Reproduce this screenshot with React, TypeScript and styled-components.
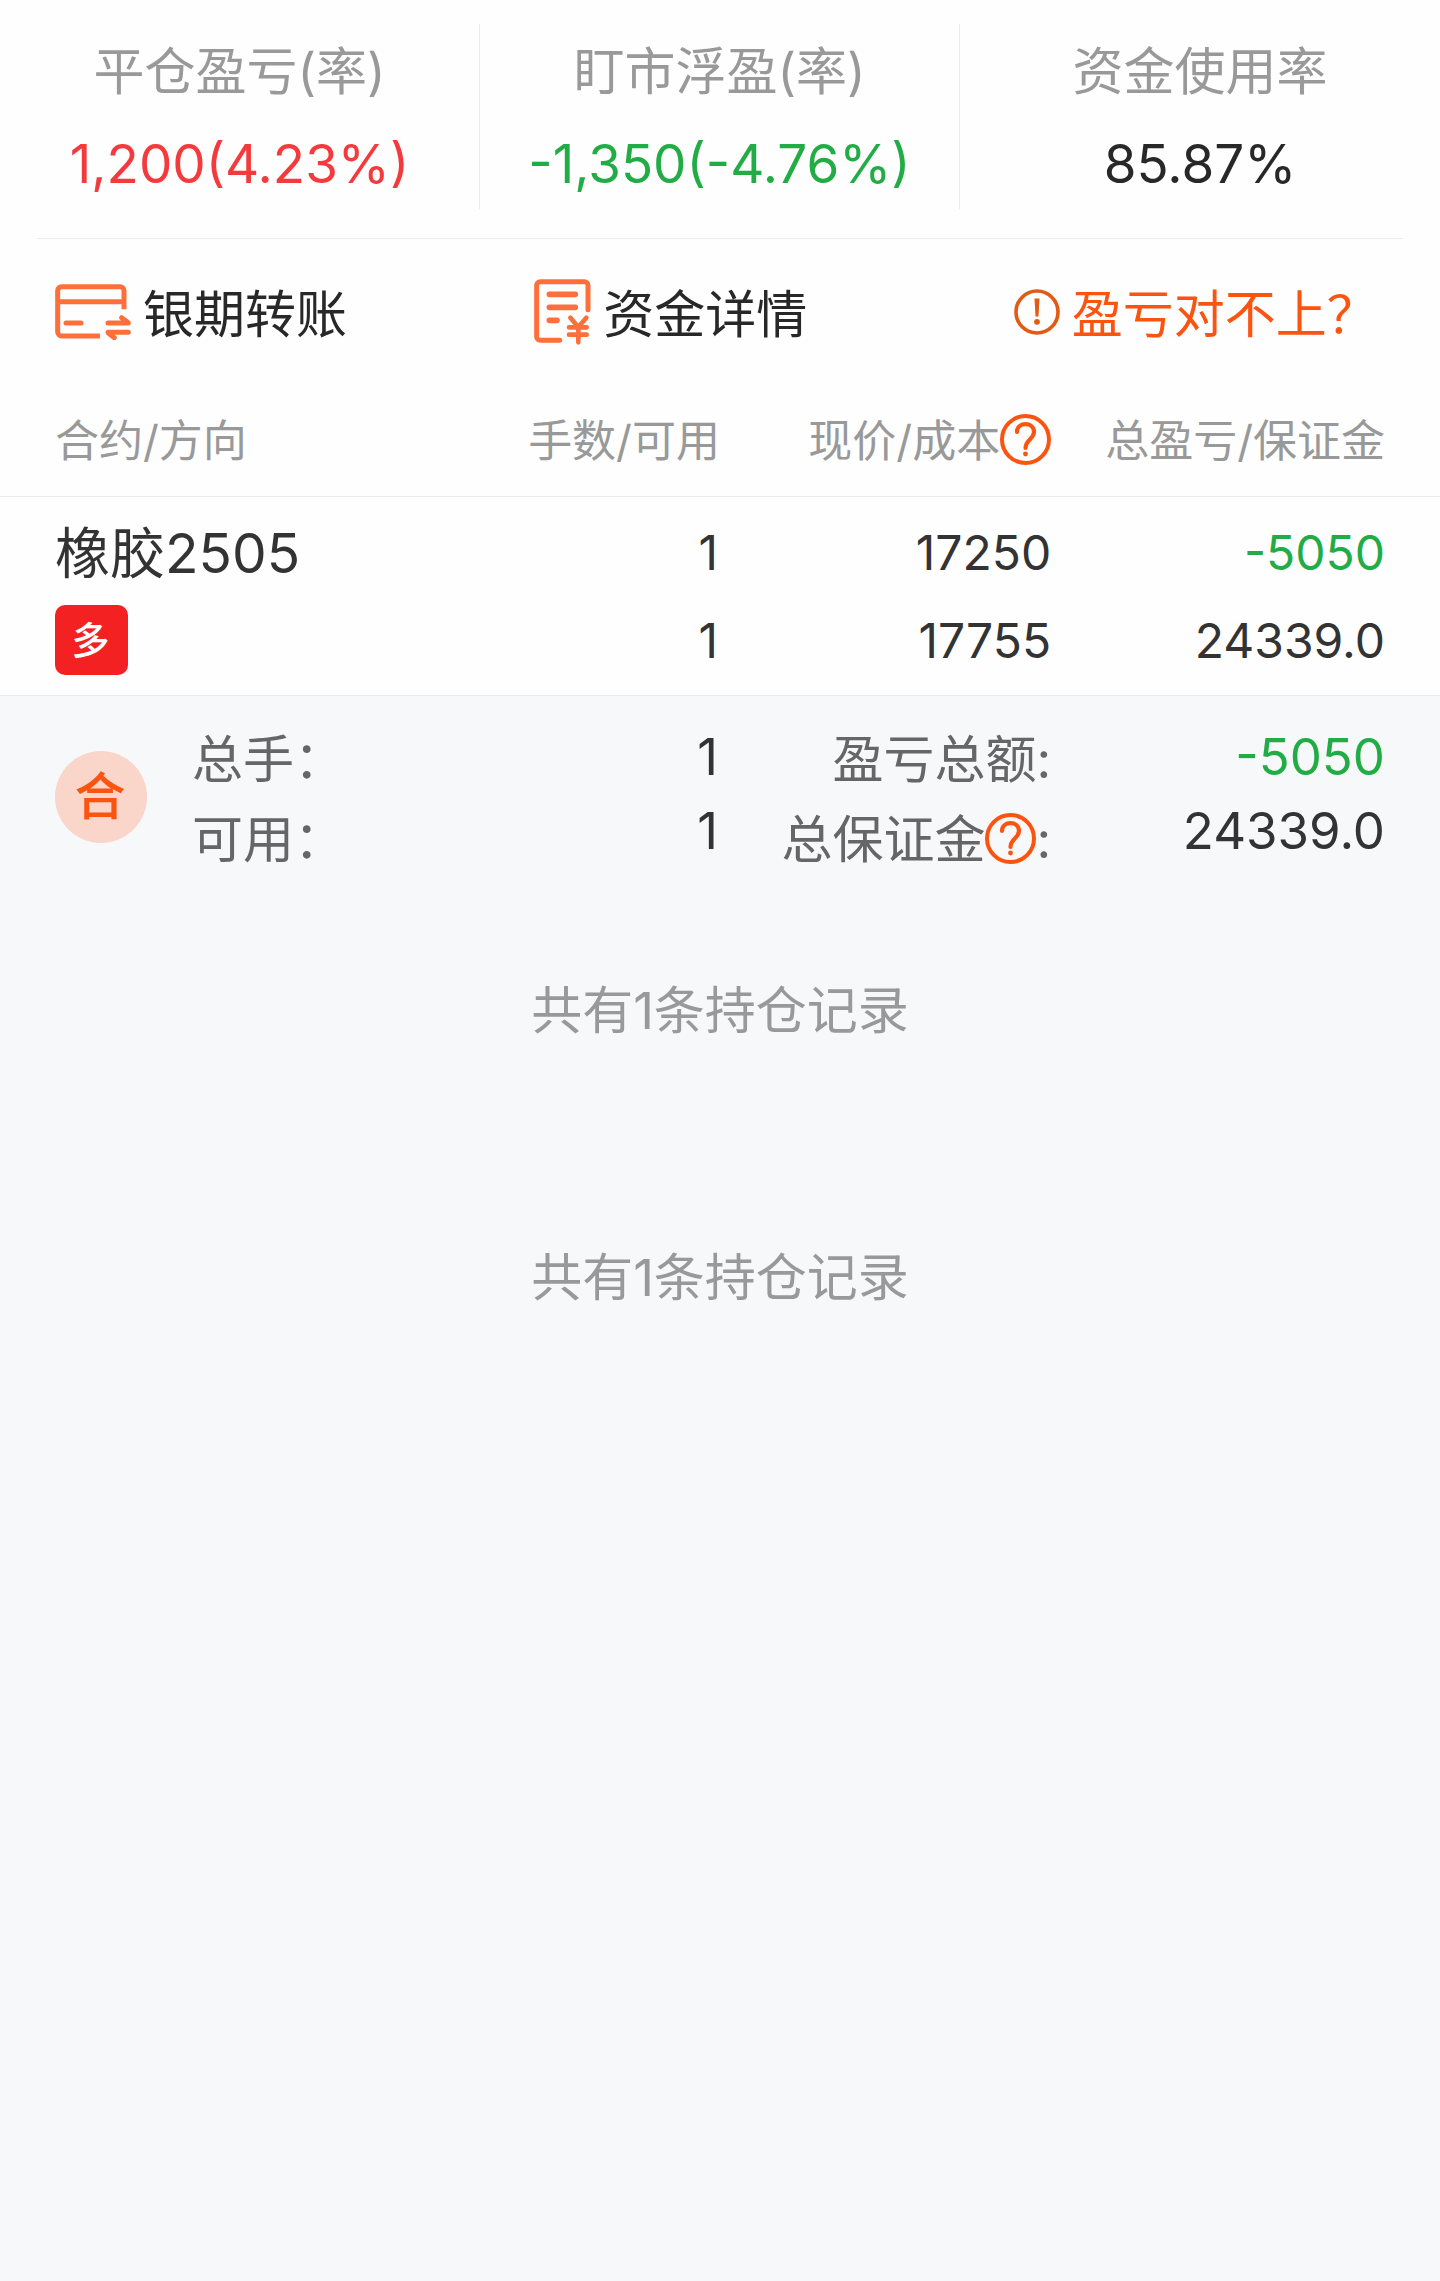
import React from "react";
import styled, { createGlobalStyle } from "styled-components";

const color = {
  ink: "#282828",
  cell: "#333333",
  muted: "#999999",
  label: "#666666",
  up: "#f43a3c",
  down: "#22ac46",
  accent: "#fb5310",
  icon: "#fe6f3c",
  line: "#ececec",
  page: "#f7f8fa",
};

type Tone = "ink" | "cell" | "up" | "down";

const GlobalStyle = createGlobalStyle`
  *, *::before, *::after { box-sizing: border-box; }
  html, body { margin: 0; background: ${color.page}; }
  body {
    font-family: Inter, "Noto Sans CJK SC", sans-serif;
    font-size: 51px;
    color: ${color.ink};
  }
`;

const Page = styled.main`
  width: 100%;
`;

const Panel = styled.section`
  background: #fefefe;
`;

const Stats = styled.dl`
  display: grid;
  grid-template-columns: repeat(3, 1fr);
  margin: 0;
  padding: 24px 0 29px;
`;

const Stat = styled.div`
  display: flex;
  flex-direction: column;
  align-items: center;
  gap: 12px;
  height: 185px;
  padding-top: 8px;

  &:not(:last-child) {
    border-right: 1px solid ${color.line};
  }
`;

const StatLabel = styled.dt`
  line-height: 80px;
  color: ${color.muted};
`;

const StatValue = styled.dd<{ $tone: Tone }>`
  margin: 0;
  font-size: 53px;
  line-height: 80px;
  color: ${(p) => color[p.$tone]};
`;

const Actions = styled.nav`
  display: grid;
  grid-template-columns: repeat(3, 1fr);
  margin: 0 37px;
  padding: 22px 0 26px;
  border-top: 1px solid ${color.line};
`;

const Action = styled.button<{ $accent?: boolean }>`
  display: flex;
  align-items: center;
  gap: 12px;
  height: 100px;
  padding: 0 0 0 18px;
  border: 0;
  background: none;
  font: inherit;
  white-space: nowrap;
  color: ${(p) => (p.$accent ? color.accent : color.ink)};
  cursor: pointer;

  &:nth-child(2) {
    padding-left: 42px;
  }
  &:nth-child(3) {
    padding-left: 66px;
  }
  svg {
    flex: none;
    margin-top: 2px;
  }
`;

const Holdings = styled.table`
  width: 100%;
  table-layout: fixed;
  border-collapse: separate;
  border-spacing: 0;

  th,
  td {
    padding: 0;
    font-weight: 400;
    text-align: right;
    vertical-align: top;
    white-space: nowrap;
  }
  th:first-child {
    padding-left: 55px;
    text-align: left;
  }
  td:nth-child(2) {
    padding-right: 2px;
  }
  th:last-child,
  td:last-child {
    padding-right: 55px;
  }
`;

const Col = styled.col<{ $share: number }>`
  width: ${(p) => p.$share}%;
`;

const HeadRow = styled.tr`
  font-size: 44px;
  color: ${color.muted};

  th {
    height: 110px;
    line-height: 109px;
    border-bottom: 1px solid ${color.line};
  }
`;

const HoldingRow = styled.tr`
  color: ${color.cell};
  font-size: 48px;

  th,
  td {
    height: 199px;
    padding-top: 12px;
    border-bottom: 1px solid ${color.line};
  }
`;

const Line = styled.div<{ $tone?: Tone }>`
  display: flex;
  align-items: center;
  justify-content: flex-end;
  line-height: 88px;
  color: ${(p) => (p.$tone ? color[p.$tone] : "inherit")};
`;

const Name = styled.div`
  font-size: 55px;
  line-height: 88px;
`;

const Side = styled.div`
  display: flex;
  align-items: center;
  justify-content: center;
  width: 73px;
  height: 70px;
  margin-top: 8px;
  padding-right: 2px;
  border-radius: 10px;
  background: #f32122;
  color: #fff;
  font-size: 38px;
  line-height: 70px;
  font-weight: 500;
`;

const TotalRow = styled.tr`
  background: ${color.page};

  th,
  td {
    padding-top: 24px;
  }
`;

const Total = styled.div`
  display: flex;
  align-items: center;
  gap: 45px;
`;

const TotalMark = styled.span`
  display: flex;
  align-items: center;
  justify-content: center;
  width: 92px;
  height: 92px;
  margin-bottom: 6px;
  padding-right: 2px;
  border-radius: 50%;
  background: #f9d5ca;
  color: ${color.accent};
  font-size: 51px;
  line-height: 92px;
  font-weight: 500;
`;

const TotalLine = styled(Line)`
  line-height: 80px;
  color: ${color.label};
`;

const TotalNames = styled.div`
  ${TotalLine} {
    justify-content: flex-start;
  }
`;

const TotalValue = styled(Line)`
  line-height: 74px;
  color: ${(p) => color[p.$tone ?? "cell"]};
`;

const Help = styled.button`
  display: inline-flex;
  padding: 0 0 4px;
  border: 0;
  background: none;
  cursor: pointer;
`;

const HeadHelp = styled.div`
  display: flex;
  align-items: center;
  justify-content: flex-end;
`;

const Notes = styled.footer`
  display: grid;
  gap: 187px;
  padding: 91px 0;
  text-align: center;
`;

const Note = styled.p`
  margin: 0;
  line-height: 80px;
  color: ${color.muted};
`;

function TransferIcon() {
  return (
    <svg width="76" height="56" viewBox="0 0 228 168" fill="none" stroke={color.icon} strokeWidth="15" strokeLinejoin="round" aria-hidden="true">
      <path d="M207 76V20a12 12 0 0 0-12-12H20A12 12 0 0 0 8 20v124a12 12 0 0 0 12 12h115M8 53h199" />
      <path d="M33 117h45M159 117h61M200 101l18 14M220 145h-61M178 161l-18-14" strokeLinecap="round" />
    </svg>
  );
}

function DetailIcon() {
  return (
    <svg width="57" height="66" viewBox="0 0 171 198" fill="none" stroke={color.icon} strokeWidth="15" strokeLinejoin="round" strokeLinecap="round" aria-hidden="true">
      <path d="M162 92V19a11 11 0 0 0-11-11H19A11 11 0 0 0 8 19v154a11 11 0 0 0 11 11h58" />
      <path d="M46 46h78M46 85h78M46 124h23" strokeWidth="17" />
      <path d="M109 116l24 28 24-28M133 144v46M105 145h53M105 167h53" strokeWidth="14" />
    </svg>
  );
}

function WarnIcon() {
  return (
    <svg width="46" height="46" viewBox="0 0 46 46" fill="none" aria-hidden="true">
      <circle cx="23" cy="23" r="21" stroke="#e25a14" strokeWidth="3.6" />
      <path d="M20.5 9.5h5l-1 18h-3z" fill="#e25a14" />
      <circle cx="23" cy="32.8" r="2.9" fill="#e25a14" />
    </svg>
  );
}

function HelpIcon() {
  return (
    <svg width="51" height="51" viewBox="0 0 51 51" fill="none" stroke={color.accent} aria-hidden="true">
      <circle cx="25.5" cy="25.5" r="23.5" strokeWidth="4" />
      <path d="M17 18C17 7.500 34 7.500 34 18c0 7-8.5 7.5-8.5 16" strokeWidth="4.2" strokeLinecap="round" />
      <circle cx="25.5" cy="40" r="2.4" fill={color.accent} stroke="none" />
    </svg>
  );
}

const stats: { label: string; value: string; tone: Tone }[] = [
  { label: "平仓盈亏(率)", value: "1,200(4.23%)", tone: "up" },
  { label: "盯市浮盈(率)", value: "-1,350(-4.76%)", tone: "down" },
  { label: "资金使用率", value: "85.87%", tone: "ink" },
];

export default function App() {
  return (
    <Page>
      <GlobalStyle />
      <Panel>
        <Stats>
          {stats.map((s) => (
            <Stat key={s.label}>
              <StatLabel>{s.label}</StatLabel>
              <StatValue $tone={s.tone}>{s.value}</StatValue>
            </Stat>
          ))}
        </Stats>

        <Actions>
          <Action type="button">
            <TransferIcon />
            银期转账
          </Action>
          <Action type="button">
            <DetailIcon />
            资金详情
          </Action>
          <Action type="button" $accent>
            <WarnIcon />
            盈亏对不上？
          </Action>
        </Actions>

        <Holdings>
          <colgroup>
            <Col $share={27} />
            <Col $share={23} />
            <Col $share={23} />
            <Col $share={27} />
          </colgroup>
          <thead>
            <HeadRow>
              <th scope="col">合约/方向</th>
              <th scope="col">手数/可用</th>
              <th scope="col">
                <HeadHelp>
                  现价/成本
                  <Help type="button" aria-label="现价/成本">
                    <HelpIcon />
                  </Help>
                </HeadHelp>
              </th>
              <th scope="col">总盈亏/保证金</th>
            </HeadRow>
          </thead>
          <tbody>
            <HoldingRow>
              <th scope="row">
                <Name>橡胶2505</Name>
                <Side>多</Side>
              </th>
              <td>
                <Line>1</Line>
                <Line>1</Line>
              </td>
              <td>
                <Line>17250</Line>
                <Line>17755</Line>
              </td>
              <td>
                <Line $tone="down">-5050</Line>
                <Line>24339.0</Line>
              </td>
            </HoldingRow>
          </tbody>
          <tfoot>
            <TotalRow>
              <th scope="row">
                <Total>
                  <TotalMark>合</TotalMark>
                  <TotalNames>
                    <TotalLine>总手：</TotalLine>
                    <TotalLine>可用：</TotalLine>
                  </TotalNames>
                </Total>
              </th>
              <td>
                <TotalValue>1</TotalValue>
                <TotalValue>1</TotalValue>
              </td>
              <td>
                <TotalLine>盈亏总额:</TotalLine>
                <TotalLine>
                  总保证金
                  <Help type="button" aria-label="总保证金">
                    <HelpIcon />
                  </Help>
                  :
                </TotalLine>
              </td>
              <td>
                <TotalValue $tone="down">-5050</TotalValue>
                <TotalValue>24339.0</TotalValue>
              </td>
            </TotalRow>
          </tfoot>
        </Holdings>
      </Panel>

      <Notes>
        <Note>共有1条持仓记录</Note>
        <Note>共有1条持仓记录</Note>
      </Notes>
    </Page>
  );
}
